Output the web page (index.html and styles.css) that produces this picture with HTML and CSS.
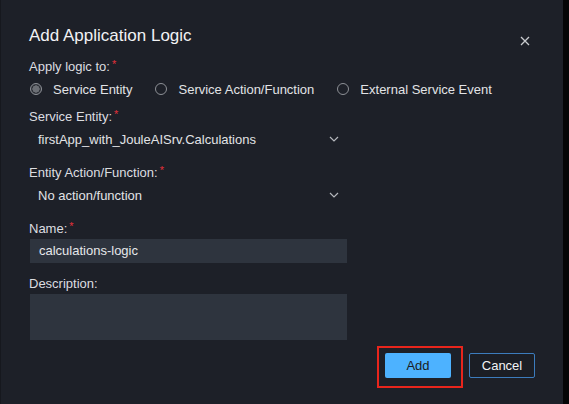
FILE: index.html
```html
<!DOCTYPE html>
<html>
<head>
<meta charset="utf-8">
<link rel="stylesheet" href="styles.css">
</head>
<body>
<div class="dialog">
  <div class="header">
    <div class="title">Add Application Logic</div>
    <svg class="close" width="10" height="10" viewBox="0 0 10 10"><path d="M1 1L9 9M9 1L1 9" stroke="#c9cbcf" stroke-width="1.3" fill="none"/></svg>
  </div>
  <div class="label l-apply">Apply logic to:<span class="req">*</span></div>
  <div class="radios">
    <span class="radio"><span class="dot sel"></span>Service Entity</span>
    <span class="radio"><span class="dot"></span>Service Action/Function</span>
    <span class="radio"><span class="dot"></span>External Service Event</span>
  </div>
  <div class="label l-field">Service Entity:<span class="req">*</span></div>
  <div class="select">
    <span>firstApp_with_JouleAISrv.Calculations</span>
    <svg class="chev" width="10" height="6" viewBox="0 0 10 6"><path d="M1 1L5 5L9 1" stroke="#b4b7bc" stroke-width="1.2" fill="none"/></svg>
  </div>
  <div class="label l-field">Entity Action/Function:<span class="req">*</span></div>
  <div class="select">
    <span>No action/function</span>
    <svg class="chev" width="10" height="6" viewBox="0 0 10 6"><path d="M1 1L5 5L9 1" stroke="#b4b7bc" stroke-width="1.2" fill="none"/></svg>
  </div>
  <div class="label l-field">Name:<span class="req">*</span></div>
  <div class="input">calculations-logic</div>
  <div class="label l-field l-desc">Description:</div>
  <div class="textarea"></div>
  <div class="actions">
    <span class="highlight"><span class="btn add">Add</span></span>
    <span class="btn cancel">Cancel</span>
  </div>
</div>
</body>
</html>
```
FILE: styles.css
```css
html, body {
  margin: 0;
  padding: 0;
  background: #050506;
  height: 100%;
}
body {
  font-family: "Liberation Sans", Arial, sans-serif;
  font-size: 13px;
  color: #dcdde0;
}
.dialog {
  width: 563px;
  height: 404px;
  background: #1d2028;
  border-left: 1px solid #16181e;
  padding: 0 28px 0 28px;
  box-sizing: border-box;
  display: flex;
  flex-direction: column;
}
.header {
  display: flex;
  align-items: center;
  justify-content: space-between;
  padding-top: 26px;
  height: 20px;
  flex: none;
}
.title {
  font-size: 17px;
  line-height: 20px;
  color: #f1f2f4;
}
.close {
  margin-right: 5px;
  margin-top: 9px;
}
.label {
  line-height: 16px;
  height: 16px;
  flex: none;
  color: #dcdde0;
}
.req {
  color: #e5303a;
  margin-left: 2px;
  font-size: 11px;
  position: relative;
  top: -3px;
}
.l-apply { margin-top: 13px; }
.radios {
  display: flex;
  align-items: center;
  height: 20px;
  flex: none;
  margin-top: 4px;
}
.radio {
  display: flex;
  align-items: center;
  margin-right: 22px;
  color: #e2e3e6;
}
.dot {
  width: 12px;
  height: 12px;
  border: 1px solid #8d9096;
  border-radius: 50%;
  box-sizing: border-box;
  margin-left: 1px;
  margin-right: 11px;
}
.dot.sel {
  border: 1.5px solid #8f9298;
  background: radial-gradient(circle, #6c6f75 0 3.4px, #30333a 3.8px);
}
.l-field { margin-top: 12px; }
.radios + .l-field { margin-top: 10px; }
.select + .l-field { margin-top: 14px; }
.l-desc { margin-top: 13px; }
.select {
  height: 24px;
  flex: none;
  margin-top: 2px;
  width: 318px;
  display: flex;
  align-items: center;
  justify-content: space-between;
  padding: 0 8px 0 9px;
  box-sizing: border-box;
  color: #e2e3e6;
}
.input {
  margin-top: 2px;
  margin-left: 1px;
  width: 317px;
  height: 24px;
  flex: none;
  line-height: 24px;
  background: #2e343e;
  padding-left: 9px;
  box-sizing: border-box;
  color: #e6e7ea;
}
.textarea {
  margin-top: 2px;
  margin-left: 1px;
  width: 317px;
  height: 46px;
  flex: none;
  background: #2e343e;
}
.actions {
  margin-top: 6px;
  display: flex;
  justify-content: flex-end;
  align-items: flex-start;
}
.highlight {
  border: 2px solid #e8251c;
  padding: 5px 10px 8px 6px;
  display: flex;
}
.btn {
  width: 66px;
  height: 25px;
  box-sizing: border-box;
  display: flex;
  align-items: center;
  justify-content: center;
  border-radius: 2px;
  font-size: 13px;
}
.add {
  background: #4db2ff;
  color: #1b1d22;
}
.cancel {
  margin-top: 7px;
  margin-left: 6px;
  border: 1px solid #3c7cbd;
  color: #f2f3f5;
  background: #1b1e25;
}
```
